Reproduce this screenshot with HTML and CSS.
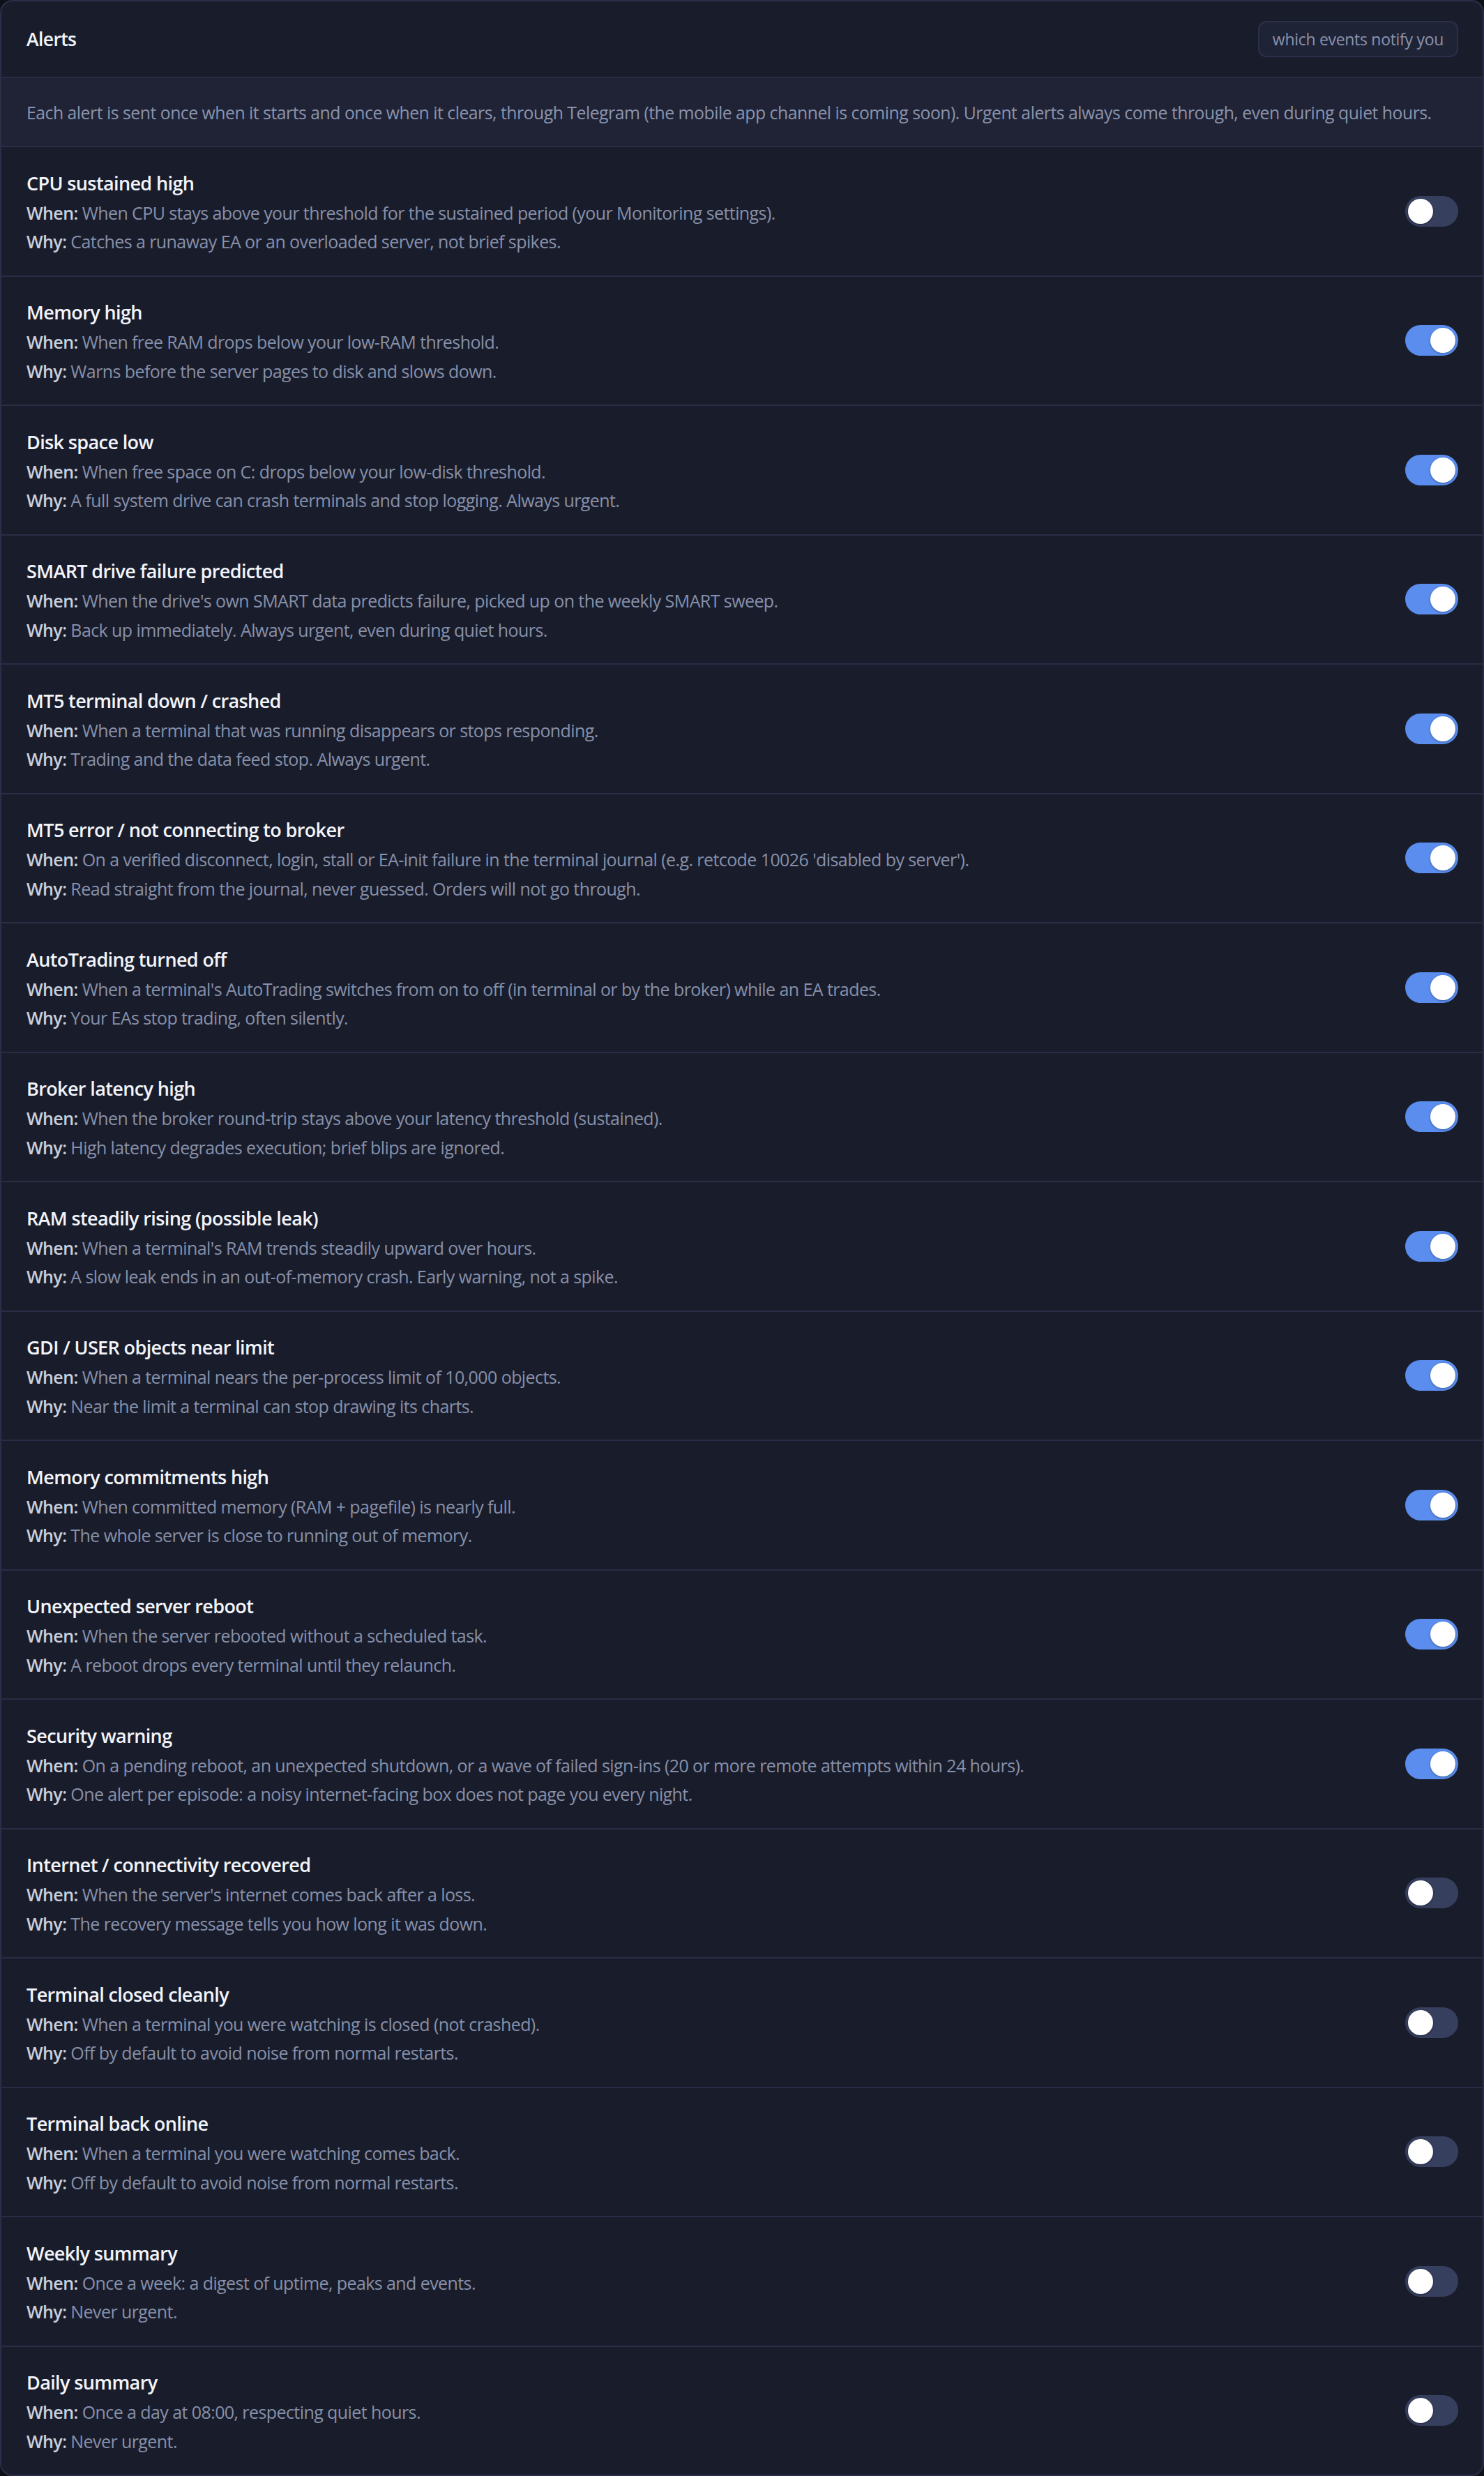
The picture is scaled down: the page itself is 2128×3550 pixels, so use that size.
FILE: index.html
```html
<!DOCTYPE html>
<html lang="en">
<head>
<meta charset="utf-8">
<title>Alerts</title>
<link rel="stylesheet" href="styles.css">
</head>
<body>
<section class="card">
  <header class="card-head">
    <h1 class="card-title">Alerts</h1>
    <span class="badge">which events notify you</span>
  </header>
  <p class="note">Each alert is sent once when it starts and once when it clears, through Telegram (the mobile app channel is coming soon). Urgent alerts always come through, even during quiet hours.</p>
  <ul class="alerts">
    <li class="alert">
      <div class="alert-text">
        <div class="alert-name">CPU sustained high</div>
        <div class="alert-line"><b>When:</b> When CPU stays above your threshold for the sustained period (your Monitoring settings).</div>
        <div class="alert-line"><b>Why:</b> Catches a runaway EA or an overloaded server, not brief spikes.</div>
      </div>
      <span class="toggle"><span class="knob"></span></span>
    </li>
    <li class="alert">
      <div class="alert-text">
        <div class="alert-name">Memory high</div>
        <div class="alert-line"><b>When:</b> When free RAM drops below your low-RAM threshold.</div>
        <div class="alert-line"><b>Why:</b> Warns before the server pages to disk and slows down.</div>
      </div>
      <span class="toggle on"><span class="knob"></span></span>
    </li>
    <li class="alert">
      <div class="alert-text">
        <div class="alert-name">Disk space low</div>
        <div class="alert-line"><b>When:</b> When free space on C: drops below your low-disk threshold.</div>
        <div class="alert-line"><b>Why:</b> A full system drive can crash terminals and stop logging. Always urgent.</div>
      </div>
      <span class="toggle on"><span class="knob"></span></span>
    </li>
    <li class="alert">
      <div class="alert-text">
        <div class="alert-name">SMART drive failure predicted</div>
        <div class="alert-line"><b>When:</b> When the drive's own SMART data predicts failure, picked up on the weekly SMART sweep.</div>
        <div class="alert-line"><b>Why:</b> Back up immediately. Always urgent, even during quiet hours.</div>
      </div>
      <span class="toggle on"><span class="knob"></span></span>
    </li>
    <li class="alert">
      <div class="alert-text">
        <div class="alert-name">MT5 terminal down / crashed</div>
        <div class="alert-line"><b>When:</b> When a terminal that was running disappears or stops responding.</div>
        <div class="alert-line"><b>Why:</b> Trading and the data feed stop. Always urgent.</div>
      </div>
      <span class="toggle on"><span class="knob"></span></span>
    </li>
    <li class="alert">
      <div class="alert-text">
        <div class="alert-name">MT5 error / not connecting to broker</div>
        <div class="alert-line"><b>When:</b> On a verified disconnect, login, stall or EA-init failure in the terminal journal (e.g. retcode 10026 'disabled by server').</div>
        <div class="alert-line"><b>Why:</b> Read straight from the journal, never guessed. Orders will not go through.</div>
      </div>
      <span class="toggle on"><span class="knob"></span></span>
    </li>
    <li class="alert">
      <div class="alert-text">
        <div class="alert-name">AutoTrading turned off</div>
        <div class="alert-line"><b>When:</b> When a terminal's AutoTrading switches from on to off (in terminal or by the broker) while an EA trades.</div>
        <div class="alert-line"><b>Why:</b> Your EAs stop trading, often silently.</div>
      </div>
      <span class="toggle on"><span class="knob"></span></span>
    </li>
    <li class="alert">
      <div class="alert-text">
        <div class="alert-name">Broker latency high</div>
        <div class="alert-line"><b>When:</b> When the broker round-trip stays above your latency threshold (sustained).</div>
        <div class="alert-line"><b>Why:</b> High latency degrades execution; brief blips are ignored.</div>
      </div>
      <span class="toggle on"><span class="knob"></span></span>
    </li>
    <li class="alert">
      <div class="alert-text">
        <div class="alert-name">RAM steadily rising (possible leak)</div>
        <div class="alert-line"><b>When:</b> When a terminal's RAM trends steadily upward over hours.</div>
        <div class="alert-line"><b>Why:</b> A slow leak ends in an out-of-memory crash. Early warning, not a spike.</div>
      </div>
      <span class="toggle on"><span class="knob"></span></span>
    </li>
    <li class="alert">
      <div class="alert-text">
        <div class="alert-name">GDI / USER objects near limit</div>
        <div class="alert-line"><b>When:</b> When a terminal nears the per-process limit of 10,000 objects.</div>
        <div class="alert-line"><b>Why:</b> Near the limit a terminal can stop drawing its charts.</div>
      </div>
      <span class="toggle on"><span class="knob"></span></span>
    </li>
    <li class="alert">
      <div class="alert-text">
        <div class="alert-name">Memory commitments high</div>
        <div class="alert-line"><b>When:</b> When committed memory (RAM + pagefile) is nearly full.</div>
        <div class="alert-line"><b>Why:</b> The whole server is close to running out of memory.</div>
      </div>
      <span class="toggle on"><span class="knob"></span></span>
    </li>
    <li class="alert">
      <div class="alert-text">
        <div class="alert-name">Unexpected server reboot</div>
        <div class="alert-line"><b>When:</b> When the server rebooted without a scheduled task.</div>
        <div class="alert-line"><b>Why:</b> A reboot drops every terminal until they relaunch.</div>
      </div>
      <span class="toggle on"><span class="knob"></span></span>
    </li>
    <li class="alert">
      <div class="alert-text">
        <div class="alert-name">Security warning</div>
        <div class="alert-line"><b>When:</b> On a pending reboot, an unexpected shutdown, or a wave of failed sign-ins (20 or more remote attempts within 24 hours).</div>
        <div class="alert-line"><b>Why:</b> One alert per episode: a noisy internet-facing box does not page you every night.</div>
      </div>
      <span class="toggle on"><span class="knob"></span></span>
    </li>
    <li class="alert">
      <div class="alert-text">
        <div class="alert-name">Internet / connectivity recovered</div>
        <div class="alert-line"><b>When:</b> When the server's internet comes back after a loss.</div>
        <div class="alert-line"><b>Why:</b> The recovery message tells you how long it was down.</div>
      </div>
      <span class="toggle"><span class="knob"></span></span>
    </li>
    <li class="alert">
      <div class="alert-text">
        <div class="alert-name">Terminal closed cleanly</div>
        <div class="alert-line"><b>When:</b> When a terminal you were watching is closed (not crashed).</div>
        <div class="alert-line"><b>Why:</b> Off by default to avoid noise from normal restarts.</div>
      </div>
      <span class="toggle"><span class="knob"></span></span>
    </li>
    <li class="alert">
      <div class="alert-text">
        <div class="alert-name">Terminal back online</div>
        <div class="alert-line"><b>When:</b> When a terminal you were watching comes back.</div>
        <div class="alert-line"><b>Why:</b> Off by default to avoid noise from normal restarts.</div>
      </div>
      <span class="toggle"><span class="knob"></span></span>
    </li>
    <li class="alert">
      <div class="alert-text">
        <div class="alert-name">Weekly summary</div>
        <div class="alert-line"><b>When:</b> Once a week: a digest of uptime, peaks and events.</div>
        <div class="alert-line"><b>Why:</b> Never urgent.</div>
      </div>
      <span class="toggle"><span class="knob"></span></span>
    </li>
    <li class="alert">
      <div class="alert-text">
        <div class="alert-name">Daily summary</div>
        <div class="alert-line"><b>When:</b> Once a day at 08:00, respecting quiet hours.</div>
        <div class="alert-line"><b>Why:</b> Never urgent.</div>
      </div>
      <span class="toggle"><span class="knob"></span></span>
    </li>
  </ul>
</section>
</body>
</html>
```

FILE: styles.css
```css
* { box-sizing: border-box; }

html, body {
  margin: 0;
  padding: 0;
  background: #0e1018;
}

body {
  font-family: "Open Sans", "Noto Sans", "Liberation Sans", sans-serif;
  color: #e8ebf3;
}

.card {
  background: #191d2b;
  border: 2px solid #2a2f47;
  border-radius: 18px;
  overflow: hidden;
  width: 2128px;
}

.card-head {
  display: flex;
  align-items: center;
  justify-content: space-between;
  height: 108px;
  padding: 0 35px 0 36px;
}

.card-title {
  margin: 0;
  font-size: 26.5px;
  font-weight: 600;
  color: #f2f4fa;
  letter-spacing: -0.6px;
}

.badge {
  display: inline-flex;
  align-items: center;
  height: 52px;
  padding: 0 19px;
  background: #1f2336;
  border: 2px solid #2a2f4a;
  border-radius: 12px;
  color: #8a93ad;
  font-size: 23px;
  letter-spacing: -0.3px;
}

.note {
  margin: 0;
  background: #1f2335;
  border-top: 2px solid #282d45;
  padding: 0 36px;
  height: 99px;
  display: flex;
  align-items: center;
  color: #8a93ad;
  font-size: 24.8px;
  letter-spacing: -0.5px;
}

.alerts {
  list-style: none;
  margin: 0;
  padding: 0;
}

.alert {
  display: flex;
  align-items: center;
  justify-content: space-between;
  border-top: 2px solid #282d45;
  height: 185.5px;
  padding: 0 35px 0 36px;
}

.alert-text {
  padding-top: 6px;
}

.alert-name {
  font-size: 27px;
  font-weight: 600;
  line-height: 38px;
  margin-bottom: 3px;
  color: #f2f4fa;
  letter-spacing: -0.62px;
}

.alert-line {
  font-size: 25px;
  line-height: 41.5px;
  color: #8790aa;
  letter-spacing: -0.58px;
}

.alert-line b {
  font-weight: 600;
  color: #c9cfdd;
}

.toggle {
  flex: none;
  position: relative;
  width: 76px;
  height: 44px;
  border-radius: 22px;
  background: #373f5f;
}

.toggle.on {
  background: #5a8dee;
}

.knob {
  position: absolute;
  top: 4px;
  left: 4px;
  width: 36px;
  height: 36px;
  border-radius: 50%;
  background: #ffffff;
  box-shadow: 0 1px 3px rgba(0, 0, 0, 0.35);
}

.toggle.on .knob {
  left: 36px;
}
```
